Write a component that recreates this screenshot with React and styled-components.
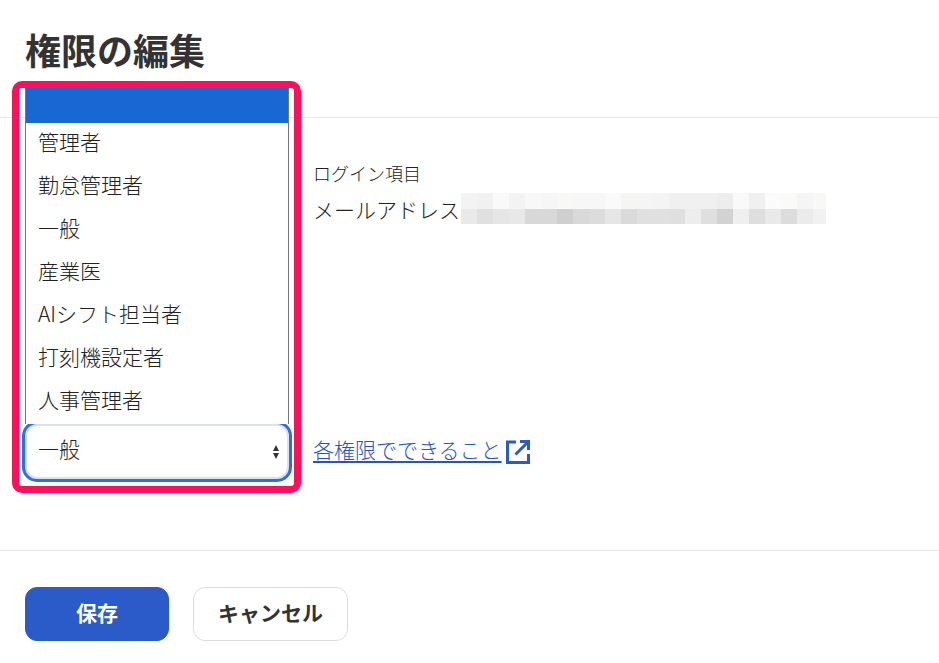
import React from "react";
import styled, { createGlobalStyle } from "styled-components";

const Global = createGlobalStyle`
  html, body { margin: 0; padding: 0; background: #fff; }
  body { font-family: "Noto Sans CJK JP", "Noto Sans", sans-serif; color: #333; }
  * { box-sizing: border-box; }
`;

const Page = styled.div`
  width: 939px;
  height: 663px;
  overflow: hidden;
  display: flex;
  flex-direction: column;
  background: #fff;
`;
const Header = styled.header`
  height: 118px;
  padding: 25px 25px 0;
  border-bottom: 1px solid #e6e6e6;
`;
const Title = styled.h1`
  margin: 0;
  font-size: 36px;
  line-height: 48px;
  font-weight: 700;
  color: #333;
`;
const Body = styled.main`
  height: 433px;
  padding: 43px 25px 71px;
  border-bottom: 1px solid #e6e6e6;
  display: grid;
  grid-template-columns: 264px 1fr;
  column-gap: 24px;
`;
const SelectColumn = styled.div`
  display: flex;
  flex-direction: column;
  justify-content: flex-end;
`;
const SelectWrap = styled.div`
  position: relative;
  height: 55px;
`;
const SelectBox = styled.div`
  height: 55px;
  padding: 0 13px;
  display: flex;
  align-items: center;
  justify-content: space-between;
  border: 2px solid #dfe1e8;
  border-radius: 12px;
  box-shadow: 0 0 0 3px #2b6cf0;
  background: #fff;
  font-size: 21px;
  font-weight: 300;
  color: #222;
`;
const SelectValue = styled.span`
  margin: 0 0 8px -2px;
`;
const Arrows = styled.svg`
  width: 6px;
  height: 14px;
  margin-right: -5px;
  fill: #333;
`;
const Menu = styled.ul`
  position: absolute;
  left: 0;
  right: 0;
  bottom: 55px;
  margin: 0;
  padding: 0;
  list-style: none;
  background: #fff;
  border: 1px solid #767676;
  border-top: 0;
  border-bottom: 0;
`;
const Option = styled.li`
  height: ${(p) => (p.$blank ? "36px" : "43px")};
  padding: 0 12px 8px;
  display: flex;
  align-items: center;
  font-size: 21px;
  font-weight: 300;
  color: #222;
  background: ${(p) => (p.$active ? "#1967d2" : "#fff")};
`;
const Highlight = styled.div`
  position: absolute;
  left: -13px;
  right: -12px;
  top: -343px;
  bottom: -14px;
  border: 7px solid #ff0f5b;
  border-radius: 10px;
  pointer-events: none;
`;
const InfoColumn = styled.div`
  display: flex;
  flex-direction: column;
  justify-content: space-between;
`;
const Label = styled.div`
  font-size: 18px;
  line-height: 24px;
  font-weight: 300;
  color: #222;
`;
const ValueRow = styled.div`
  display: flex;
  align-items: center;
  margin-top: 8px;
  font-size: 21px;
  line-height: 30px;
  font-weight: 300;
  color: #222;
`;
const ValueText = styled.span`
  width: 148px;
`;
const Mosaic = styled.div`
  display: grid;
  grid-template-columns: repeat(22, 16px) 13px;
  grid-template-rows: 16px 15px;
`;
const Cell = styled.span`
  background: ${(p) => p.$c};
`;
const HelpLink = styled.a`
  height: 55px;
  display: flex;
  align-items: center;
  font-size: 21px;
  font-weight: 300;
  color: #2455c4;
  text-decoration: none;
`;
const HelpText = styled.span`
  margin-bottom: 6px;
  text-decoration: underline;
  text-decoration-thickness: 2px;
  text-underline-offset: 3px;
`;
const ExternalIcon = styled.svg`
  width: 24px;
  height: 24px;
  margin-left: 4px;
  fill: none;
  stroke: #2a5bc8;
  stroke-width: 3;
`;
const Footer = styled.footer`
  padding: 36px 25px 0;
  display: flex;
  gap: 24px;
`;
const Button = styled.button`
  height: 54px;
  width: ${(p) => (p.$primary ? "144px" : "155px")};
  border-radius: 12px;
  border: 1px solid ${(p) => (p.$primary ? "#2a5bc8" : "#dcdcdc")};
  background: ${(p) => (p.$primary ? "#2a5bc8" : "#fff")};
  color: ${(p) => (p.$primary ? "#fff" : "#333")};
  font-family: inherit;
  font-size: 21px;
  font-weight: 700;
  padding: 0 0 4px;
`;

const top = ["#f3f3f3","#f1f1f1","#f9f9f9","#f3f3f3","#f8f8f8","#f6f6f6","#f8f8f6","#f7f7f7","#f7f7f7","#fafafa","#f5f5f3","#f5f5f5","#f4f4f4","#f0f0f0","#f0f0f0","#f0f0f0","#ededed","#f9f9f9","#f0f0f0","#fbfbfb","#fafaf9","#f5f5f5","#f8f8f6"];
const bottom = ["#e9e9e9","#e0e0e0","#e6e6e6","#e8e8e8","#d8d8d8","#d8d8d8","#cfcfcf","#d9d9d9","#dcdcdc","#e6e6e6","#dadada","#e0e0e0","#e0e0e0","#dfdfdf","#ededed","#dfdfdf","#d2d2d2","#efefef","#dedede","#e9e9e9","#dcdcdc","#ebebeb","#f1f1f1"];
const roles = ["管理者","勤怠管理者","一般","産業医","AIシフト担当者","打刻機設定者","人事管理者"];

export default function App() {
  return (
    <Page>
      <Global />
      <Header><Title>権限の編集</Title></Header>
      <Body>
        <SelectColumn>
          <SelectWrap>
            <SelectBox>
              <SelectValue>一般</SelectValue>
              <Arrows viewBox="0 0 6 14"><path d="M3 0 6 6H0zM3 14 0 8h6z" /></Arrows>
            </SelectBox>
            <Menu>
              <Option $blank $active />
              {roles.map((r) => <Option key={r}>{r}</Option>)}
            </Menu>
            <Highlight />
          </SelectWrap>
        </SelectColumn>
        <InfoColumn>
          <div>
            <Label>ログイン項目</Label>
            <ValueRow>
              <ValueText>メールアドレス</ValueText>
              <Mosaic>
                {top.concat(bottom).map((c, i) => <Cell key={i} $c={c} />)}
              </Mosaic>
            </ValueRow>
          </div>
          <HelpLink href="#">
            <HelpText>各権限でできること</HelpText>
            <ExternalIcon viewBox="0 0 24 24">
              <path d="M10 2H1.5v20.5h21V14" />
              <path d="M9.5 14.5 22 2M14 1.5h8.5V10" />
            </ExternalIcon>
          </HelpLink>
        </InfoColumn>
      </Body>
      <Footer>
        <Button $primary>保存</Button>
        <Button>キャンセル</Button>
      </Footer>
    </Page>
  );
}
